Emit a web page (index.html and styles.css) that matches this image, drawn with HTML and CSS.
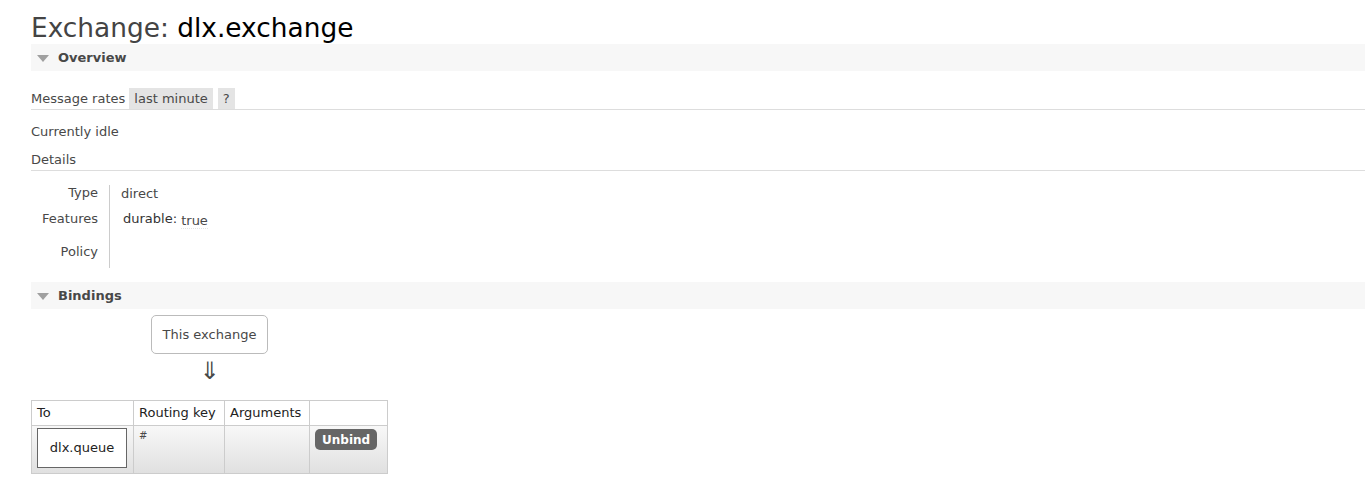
FILE: index.html
```html
<!DOCTYPE html>
<html>
<head>
<meta charset="utf-8">
<link rel="stylesheet" href="styles.css">
</head>
<body>
<div class="main">
  <h1 class="title">Exchange: <b>dlx.exchange</b></h1>

  <div class="section">
    <h2 class="section-head"><span class="tri"></span>Overview</h2>
    <div class="section-body">
      <div class="rates-bar">
        <span class="rates-label">Message rates</span>
        <span class="pill">last minute</span>
        <span class="pill">?</span>
      </div>
      <p class="idle">Currently idle</p>
      <h3 class="sub">Details</h3>
      <div class="facts">
        <div class="facts-keys">
          <div class="k k-type">Type</div>
          <div class="k k-feat">Features</div>
          <div class="k k-pol">Policy</div>
        </div>
        <div class="facts-vals">
          <div class="v v-type">direct</div>
          <div class="v v-feat"><span class="feat-name">durable:</span> <span class="feat-val">true</span></div>
          <div class="v v-pol"></div>
        </div>
      </div>
    </div>
  </div>

  <div class="section">
    <h2 class="section-head"><span class="tri"></span>Bindings</h2>
    <div class="bindings">
      <div class="flow">
        <div class="this-ex">This exchange</div>
        <div class="arrow">⇓</div>
      </div>
      <table class="list">
        <thead>
          <tr><th class="c-to">To</th><th class="c-rk">Routing key</th><th class="c-args">Arguments</th><th class="c-act"></th></tr>
        </thead>
        <tbody>
          <tr>
            <td class="c-to"><span class="queue-box">dlx.queue</span></td>
            <td class="c-rk"><span class="rk">#</span></td>
            <td class="c-args"></td>
            <td class="c-act"><button class="btn">Unbind</button></td>
          </tr>
        </tbody>
      </table>
    </div>
  </div>
</div>
</body>
</html>
```

FILE: styles.css
```css
* { box-sizing: border-box; }
html, body { margin: 0; padding: 0; background: #fff; }
body {
  font-family: "DejaVu Sans", Verdana, sans-serif;
  font-size: 13px;
  color: #484848;
}
.main { padding-left: 31px; }

.title {
  margin: 0;
  padding-top: 13px;
  height: 44px;
  font-size: 26.4px;
  font-weight: normal;
  color: #444;
  line-height: 30px;
}
.title b { font-weight: normal; color: #000; }

.section-head {
  margin: 0;
  height: 27px;
  background: #f7f7f7;
  font-size: 13px;
  font-weight: bold;
  color: #484848;
  display: flex;
  align-items: center;
  padding-left: 6px;
}
.tri {
  width: 0; height: 0;
  border-left: 6px solid transparent;
  border-right: 6px solid transparent;
  border-top: 7px solid #a0a0a0;
  margin-right: 9px;
  margin-top: 1px;
}

.rates-bar {
  margin-top: 17px;
  height: 22px;
  border-bottom: 1px solid #ddd;
  display: flex;
  align-items: stretch;
}
.rates-label { line-height: 21px; margin-right: 4px; }
.pill {
  background: #e4e4e4;
  padding: 0 5px 0 5px;
  line-height: 21px;
  margin-right: 5px;
}
.idle { margin: 14px 0 0; line-height: 16px; }
.sub {
  margin: 12px 0 0;
  font-size: 13px;
  font-weight: normal;
  padding-bottom: 2px;
  line-height: 16px;
  border-bottom: 1px solid #ddd;
}

.facts { display: flex; margin-top: 14px; height: 83px; }
.facts-keys {
  width: 79px;
  text-align: right;
  border-right: 1px solid #ccc;
  padding-right: 11px;
}
.facts-vals { padding-left: 11px; }
.k, .v { line-height: 16px; }
.k-type { height: 26px; }
.v-type { height: 26px; padding-top: 1px; }
.k-feat { height: 33px; }
.v-feat { padding-top: 0; padding-left: 2px; }
.feat-name { color: #333; }
.feat-val { position: relative; top: 2px; border-bottom: 1px dotted #e4e4e4; }

.section + .section { margin-top: 14px; }

.bindings { padding-top: 6px; padding-bottom: 6px; }
.flow { width: 357px; display: flex; flex-direction: column; align-items: center; }
.this-ex {
  border: 1px solid #bbb;
  border-radius: 5px;
  padding: 0 11px;
  height: 39px;
  line-height: 37px;
  font-size: 13px;
}
.arrow {
  font-size: 24px;
  line-height: 26px;
  height: 46px;
  padding-top: 4px;
  color: #484848;
}

table.list {
  border-collapse: collapse;
  border: 1px solid #ccc;
  font-size: 13px;
}
table.list th, table.list td {
  border: 1px solid #ccc;
  text-align: left;
  vertical-align: top;
}
table.list th {
  font-weight: normal;
  color: #222;
  height: 24px;
  padding: 0 5px;
  line-height: 24px;
  background: #fff;
}
table.list tbody tr {
  background: linear-gradient(#f8f8f8, #e0e0e0);
}
table.list td { height: 48px; padding: 2px 5px; }
.c-to { width: 102px; }
.c-rk { width: 91px; }
.c-args { width: 85px; }
.c-act { width: 78px; }
.queue-box {
  display: block;
  width: 90px;
  height: 40px;
  line-height: 38px;
  border: 1px solid #666;
  background: #fff;
  text-align: center;
  color: #222;
  font-size: 13px;
}
.rk { font-size: 10px; display: block; margin-top: 2px; }
.btn {
  font-family: "DejaVu Sans", Verdana, sans-serif;
  font-weight: bold;
  font-size: 12px;
  color: #fff;
  background: #666;
  border: none;
  border-radius: 5px;
  padding: 0 7px;
  height: 21px;
  margin-top: 1px;
}
```
